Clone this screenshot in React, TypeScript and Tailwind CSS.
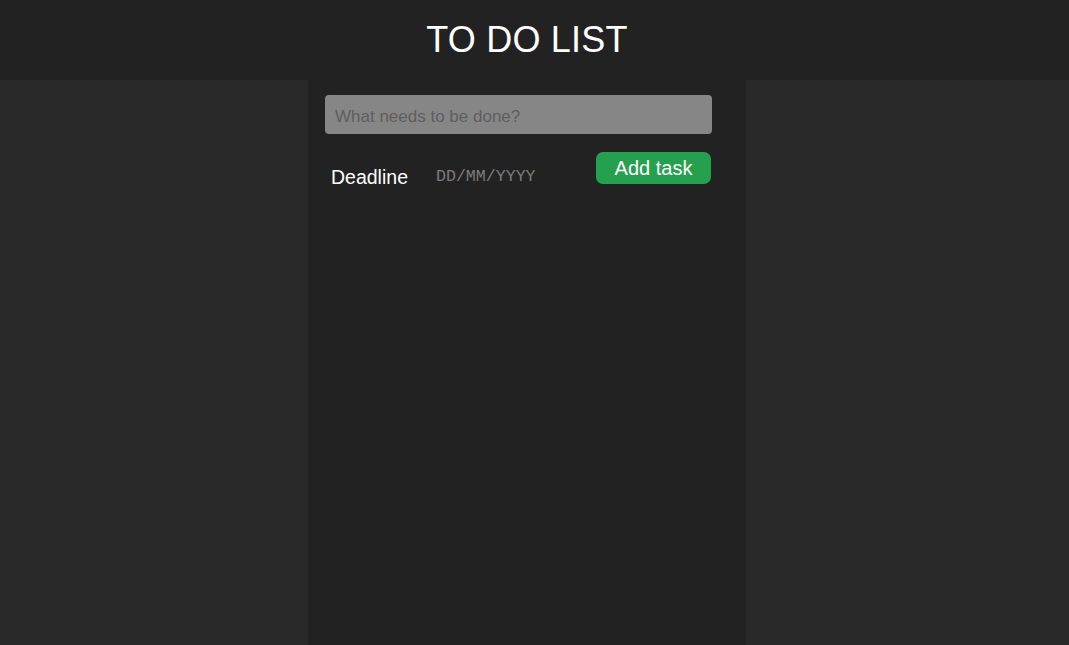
import { useState } from "react";

export default function App(): JSX.Element {
  const [task, setTask] = useState<string>("");

  return (
    <div
      className="min-h-[645px] h-screen flex flex-col bg-[#292929]"
      style={{ fontFamily: '"Liberation Sans", Arial, sans-serif' }}
    >
      {/* Header */}
      <header className="h-[80px] shrink-0 bg-[#222222] flex items-center justify-center pr-[15px]">
        <h1 className="text-[36px] text-white leading-none tracking-[0.2px]">TO DO LIST</h1>
      </header>

      {/* Body */}
      <div className="flex-1 flex">
        <div className="w-[308px] shrink-0"></div>
        <main className="w-[438px] shrink-0 bg-[#222222] pl-[17px] pt-[15px]">
          <input
            className="w-[387px] h-[39px] rounded-[4px] bg-[#868686] px-[10px] pt-[4px] text-[17px] text-[#333] placeholder:text-[#5e5e5e] focus:outline-none"
            placeholder="What needs to be done?"
            value={task}
            onChange={(e) => setTask(e.target.value)}
          />
          <div className="w-[386px] mt-[18px] flex items-start">
            <span className="ml-[6px] mt-[12px] text-[19.5px] leading-[26px] text-white">Deadline</span>
            <span
              className="ml-[28px] mt-[13px] text-[16.6px] leading-[24px] text-[#7b7b7b]"
              style={{ fontFamily: '"Liberation Mono", "Courier New", monospace' }}
            >
              DD/MM/YYYY
            </span>
            <button className="ml-auto h-[32px] w-[115px] rounded-[7px] bg-[#25a04f] text-white text-[20px] leading-none pb-[1px]">
              Add task
            </button>
          </div>
        </main>
        <div className="flex-1"></div>
      </div>
    </div>
  );
}
